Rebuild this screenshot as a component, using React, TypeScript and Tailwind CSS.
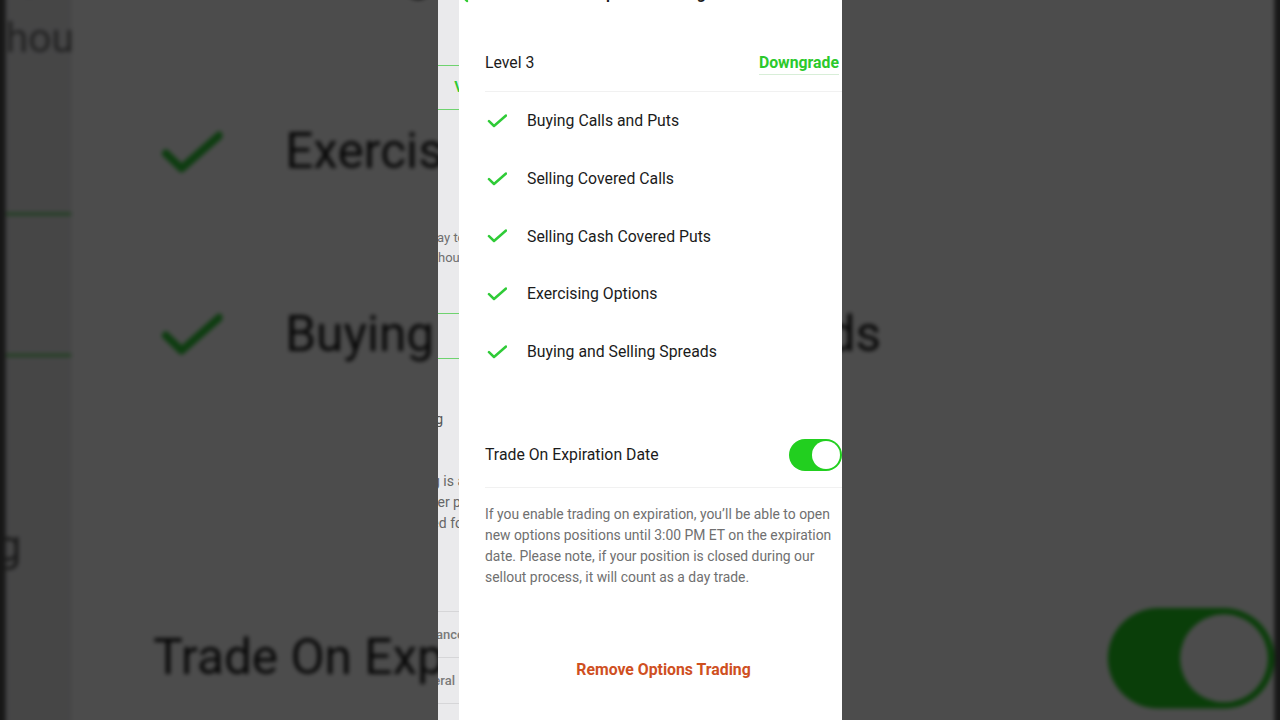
import React from "react";

function Check() {
  return (
    <svg width="20" height="14" viewBox="0 0 20 14" className="shrink-0 ml-[2px]">
      <path d="M2 7.2 L7 12 L19 1.5" fill="none" stroke="#2fcb37" strokeWidth="2.5" strokeLinecap="round" strokeLinejoin="round" />
    </svg>
  );
}

function Strip() {
  return (
    <div className="w-[21px] shrink-0 bg-[#eaeaec] overflow-hidden flex flex-col text-[#6f6f6f]">
      <div className="h-[66px] shrink-0 border-b border-[#6fd36f]" />
      <div className="h-[44px] shrink-0 border-b border-[#6fd36f] flex items-center justify-end">
        <span className="whitespace-nowrap text-[15px] font-semibold text-[#2fc92f] -mr-[5px]">V</span>
      </div>
      <div className="h-[118px] shrink-0" />
      <div className="flex flex-col items-end text-[13px] leading-[20px]">
        <span className="whitespace-nowrap -mr-[6px]">a way to</span>
        <span className="whitespace-nowrap -mr-[5px]">without</span>
      </div>
      <div className="h-[46px] shrink-0 border-b border-[#6fd36f]" />
      <div className="h-[45px] shrink-0 border-b border-[#6fd36f]" />
      <div className="h-[50px] shrink-0" />
      <div className="flex justify-end text-[14px] leading-[20px] text-[#555]">
        <span className="whitespace-nowrap mr-[16px]">Trading</span>
      </div>
      <div className="h-[42px] shrink-0" />
      <div className="flex flex-col items-end text-[14px] leading-[21px] text-[#666]">
        <span className="whitespace-nowrap -mr-[6px]">trading is a</span>
        <span className="whitespace-nowrap -mr-[2px]">riskier p</span>
        <span className="whitespace-nowrap -mr-[4px]">suited fo</span>
      </div>
      <div className="h-[78px] shrink-0 border-b border-[#d6d6d8]" />
      <div className="h-[46px] shrink-0 border-b border-[#d6d6d8] flex items-center justify-end text-[13px] font-medium text-[#7a7a7a]">
        <span className="whitespace-nowrap -mr-[5px]">Balance</span>
      </div>
      <div className="h-[46px] shrink-0 border-b border-[#d6d6d8] flex items-center justify-end text-[13px] font-medium text-[#7a7a7a]">
        <span className="whitespace-nowrap mr-[4px]">Collateral</span>
      </div>
    </div>
  );
}

const items = [
  "Buying Calls and Puts",
  "Selling Covered Calls",
  "Selling Cash Covered Puts",
  "Exercising Options",
  "Buying and Selling Spreads",
];

function Panel() {
  return (
    <div className="flex-1 flex flex-col bg-white pl-[26px] text-[#1b1b1b]">
      <div className="flex items-center h-[20px] -mt-[16px] -ml-[26px] shrink-0">
        <svg width="14" height="20" viewBox="0 0 14 20" className="shrink-0">
          <path d="M10 1 L1.5 10 L8 17" fill="none" stroke="#2fcb2f" strokeWidth="2.4" strokeLinecap="round" strokeLinejoin="round" />
        </svg>
        <div className="flex-1 text-center text-[16px] font-semibold leading-[20px] pr-[6px]">Options Settings</div>
      </div>
      <div className="mt-[32px] h-[56px] shrink-0 flex items-center justify-between border-b border-[#f1f1f1]">
        <span className="text-[15.8px] -mt-[1px]">Level 3</span>
        <span className="text-[15.8px] font-bold text-[#2cc92c] mr-[3px] leading-[20px] pb-[1px] border-b border-[#d8eed8]">Downgrade</span>
      </div>
      {items.map((t) => (
        <div key={t} className="h-[57.75px] shrink-0 flex items-center">
          <Check />
          <span className="ml-[20px] text-[15.8px]">{t}</span>
        </div>
      ))}
      <div className="mt-[43px] h-[64px] shrink-0 flex items-center justify-between border-b border-[#f1f1f1]">
        <span className="text-[15.8px]">Trade On Expiration Date</span>
        <div className="w-[53px] h-[32px] rounded-full bg-[#22cf1f] p-[2px] flex justify-end">
          <div className="w-[28px] h-[28px] rounded-full bg-white" />
        </div>
      </div>
      <p className="mt-[16px] pr-[4px] text-[13.9px] leading-[21px] text-[#707070] whitespace-nowrap">
        If you enable trading on expiration, you’ll be able to open
        <br />
        new options positions until 3:00 PM ET on the expiration
        <br />
        date. Please note, if your position is closed during our
        <br />
        sellout process, it will count as a day trade.
      </p>
      <div className="mt-[72px] text-center text-[15.8px] leading-[20px] font-bold text-[#cf501f]">Remove Options Trading</div>
    </div>
  );
}

function Phone() {
  return (
    <div className="w-[404px] h-[720px] shrink-0 overflow-hidden flex bg-white">
      <Strip />
      <Panel />
    </div>
  );
}

export default function App() {
  return (
    <div className="relative w-full h-[720px] overflow-hidden bg-[#4e4e4e] font-[family-name:Roboto,sans-serif]">
      <div className="absolute inset-0 flex items-center justify-center blur-[2px]">
        <div className="scale-[3.14] shrink-0">
          <Phone />
        </div>
      </div>
      <div className="absolute inset-0 bg-black/70" />
      <div className="relative flex justify-center">
        <Phone />
      </div>
    </div>
  );
}
